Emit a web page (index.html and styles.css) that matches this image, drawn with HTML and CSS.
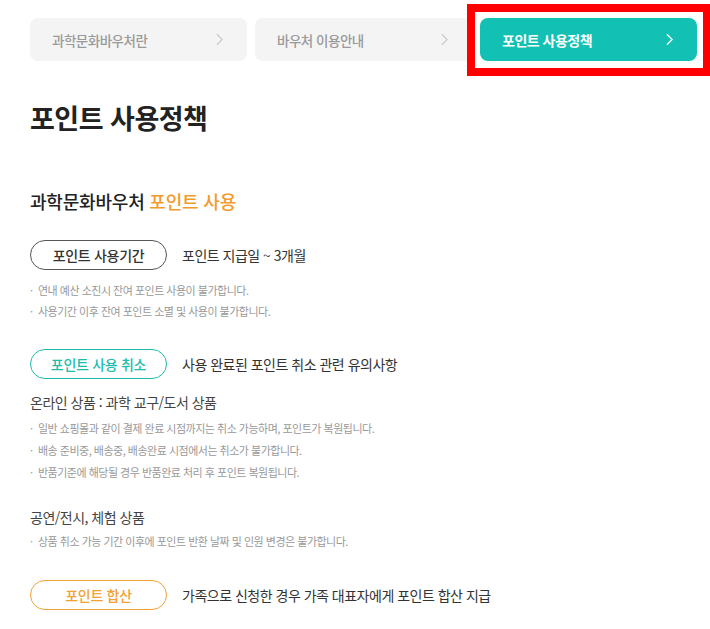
FILE: index.html
```html
<!DOCTYPE html>
<html lang="ko">
<head>
<meta charset="utf-8">
<link rel="stylesheet" href="styles.css">
</head>
<body>
<div class="page">
  <nav class="tabs">
    <a class="tab">과학문화바우처란<svg class="chev" viewBox="0 0 8 14"><path d="M1 1l6 6-6 6"/></svg></a>
    <a class="tab">바우처 이용안내<svg class="chev" viewBox="0 0 8 14"><path d="M1 1l6 6-6 6"/></svg></a>
    <a class="tab active">포인트 사용정책<svg class="chev" viewBox="0 0 8 14"><path d="M1 1l6 6-6 6"/></svg><span class="mark"></span></a>
  </nav>

  <h1 class="title">포인트 사용정책</h1>

  <h2 class="section-title">과학문화바우처 <em>포인트 사용</em></h2>

  <div class="item">
    <div class="row"><span class="pill pill-dark">포인트 사용기간</span><span class="desc">포인트 지급일 ~ 3개월</span></div>
    <ul class="notes">
      <li>연내 예산 소진시 잔여 포인트 사용이 불가합니다.</li>
      <li>사용기간 이후 잔여 포인트 소멸 및 사용이 불가합니다.</li>
    </ul>
  </div>

  <div class="item">
    <div class="row"><span class="pill pill-teal">포인트 사용 취소</span><span class="desc">사용 완료된 포인트 취소 관련 유의사항</span></div>
    <h3 class="sub">온라인 상품 : 과학 교구/도서 상품</h3>
    <ul class="notes notes-wide">
      <li>일반 쇼핑몰과 같이 결제 완료 시점까지는 취소 가능하며, 포인트가 복원됩니다.</li>
      <li>배송 준비중, 배송중, 배송완료 시점에서는 취소가 불가합니다.</li>
      <li>반품기준에 해당될 경우 반품완료 처리 후 포인트 복원됩니다.</li>
    </ul>
    <h3 class="sub sub-2">공연/전시, 체험 상품</h3>
    <ul class="notes">
      <li>상품 취소 가능 기간 이후에 포인트 반환 날짜 및 인원 변경은 불가합니다.</li>
    </ul>
  </div>

  <div class="item item-3">
    <div class="row"><span class="pill pill-orange">포인트 합산</span><span class="desc">가족으로 신청한 경우 가족 대표자에게 포인트 합산 지급</span></div>
  </div>
</div>
</body>
</html>
```

FILE: styles.css
```css
html, body {
  margin: 0;
  padding: 0;
  background: #fff;
}
body {
  font-family: "Noto Sans CJK KR", "Noto Sans", sans-serif;
  color: #333;
  letter-spacing: -0.5px;
  width: 710px;
  height: 629px;
  overflow: hidden;
}
.page {
  padding: 18px 0 0 30px;
}
.tabs {
  display: flex;
  gap: 8px;
}
.tab {
  position: relative;
  box-sizing: border-box;
  width: 217px;
  height: 43px;
  border-radius: 8px;
  background: #f4f4f4;
  color: #9a9a9a;
  font-size: 13.5px;
  font-weight: 500;
  display: flex;
  align-items: center;
  justify-content: space-between;
  padding: 0 24px 0 22px;
}
.chev {
  width: 7px;
  height: 13px;
  fill: none;
  stroke: #c8c8c8;
  stroke-width: 1.3;
}
.tab.active {
  background: #12c1b3;
  color: #fff;
  font-weight: 700;
  font-size: 14px;
}
.tab.active .chev {
  stroke: #fff;
  stroke-width: 1.6;
}
.mark {
  position: absolute;
  left: -13px;
  top: -14px;
  width: 244px;
  height: 72px;
  box-sizing: border-box;
  border: 8px solid #f00;
}
.title {
  margin: 40px 0 0;
  font-size: 27px;
  font-weight: 700;
  color: #222;
  line-height: 34px;
}
.section-title {
  margin: 54px 0 0;
  font-size: 18px;
  font-weight: 500;
  letter-spacing: -0.2px;
  color: #222;
  line-height: 24px;
}
.section-title em {
  font-style: normal;
  color: #f39a2c;
}
.item {
  margin-top: 27px;
}
.item-3 {
  margin-top: 28px;
}
.row {
  display: flex;
  align-items: center;
  gap: 15px;
}
.pill {
  box-sizing: border-box;
  width: 137px;
  height: 30px;
  border-radius: 15px;
  border: 1px solid #555;
  display: flex;
  align-items: center;
  justify-content: center;
  font-size: 14px;
  font-weight: 500;
  letter-spacing: -0.3px;
  color: #333;
}
.pill-teal {
  border-color: #1ebcae;
  color: #1ebcae;
}
.pill-orange {
  border-color: #f2a234;
  color: #f2a234;
}
.desc {
  font-size: 14px;
  color: #333;
}
.notes {
  list-style: none;
  margin: 10px 0 0;
  padding: 0;
}
.notes li {
  position: relative;
  padding-left: 8px;
  font-size: 11px;
  line-height: 21px;
  color: #999;
}
.notes-wide li {
  line-height: 22px;
}
.notes li::before {
  content: "·";
  position: absolute;
  left: 0;
  top: 0;
}
.sub {
  margin: 12px 0 0;
  font-size: 14px;
  font-weight: 400;
  color: #444;
  line-height: 22px;
}
.sub-2 {
  margin-top: 23px;
}
.sub + .notes {
  margin-top: 4px;
}
.sub-2 + .notes {
  margin-top: 3px;
}
```
